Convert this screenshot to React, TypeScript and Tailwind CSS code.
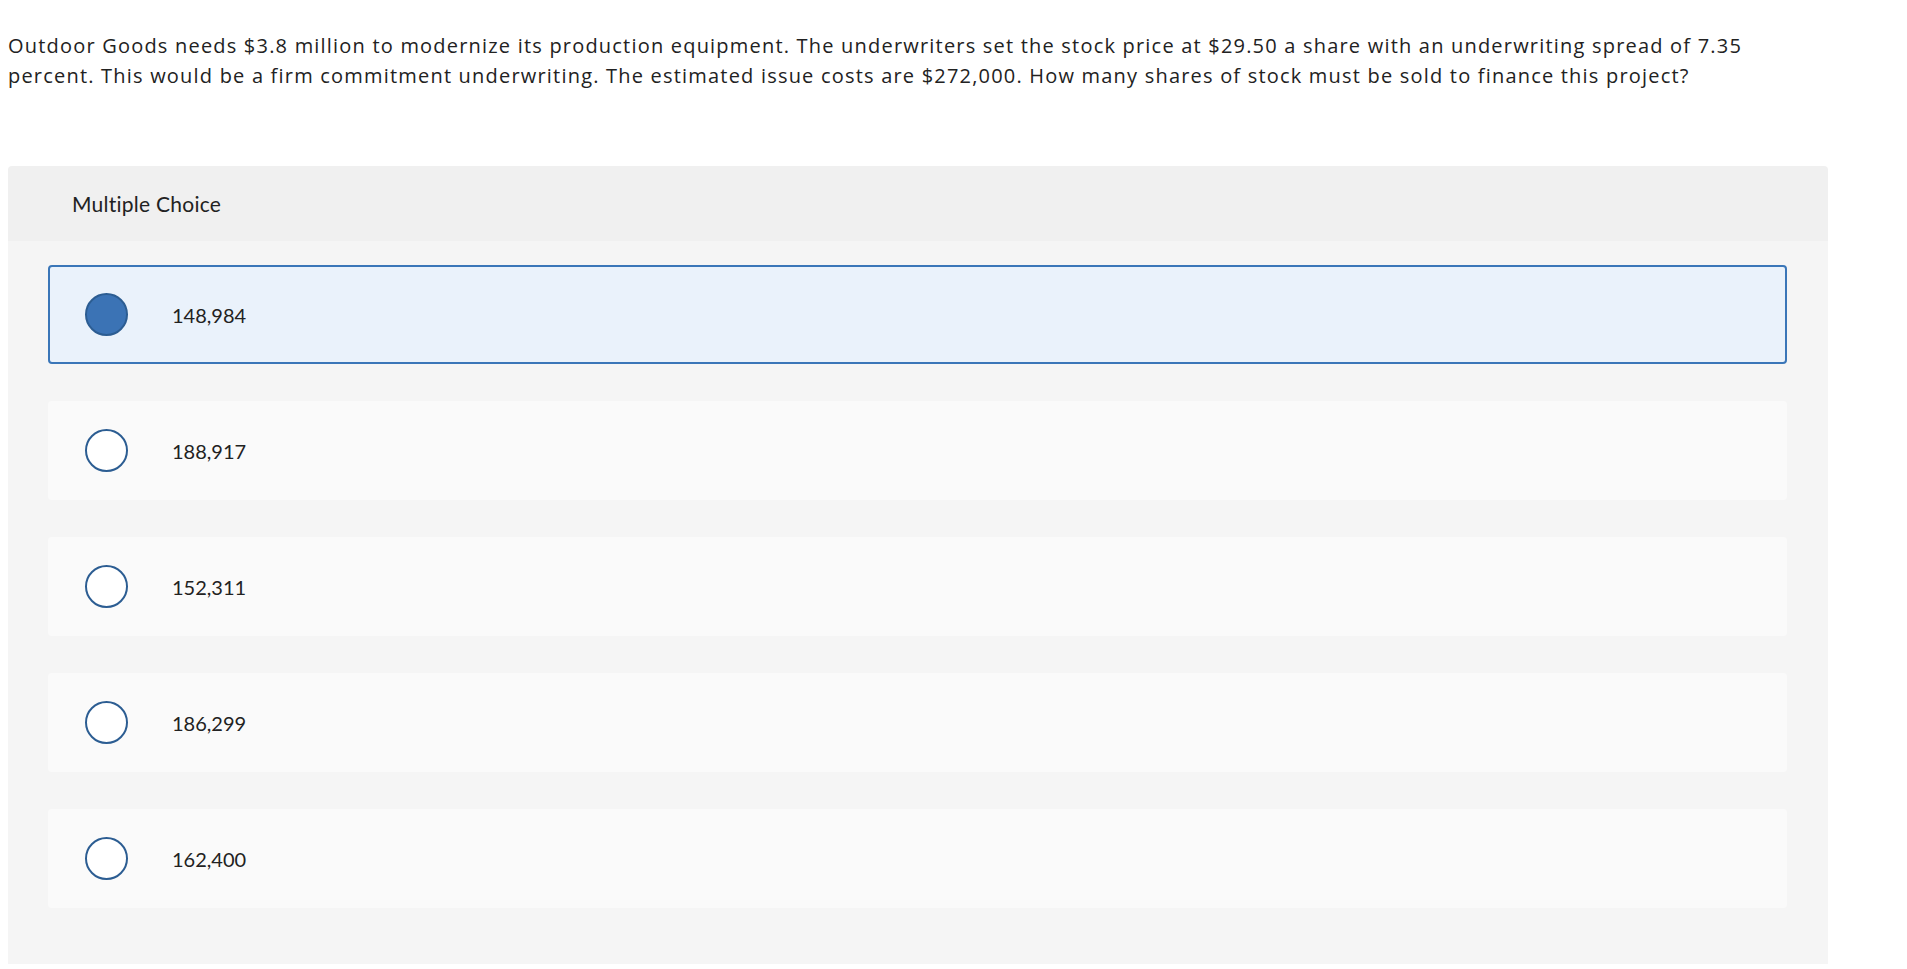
import { useState } from 'react';

const choices = ['148,984', '188,917', '152,311', '186,299', '162,400'];

export default function App() {
  const [picked, setPicked] = useState(0);

  return (
    <div className="min-h-screen bg-white pl-2 pt-[31px] text-[#222] [font-family:Lato,'Open_Sans',sans-serif]">
      <p className="w-[1775px] text-[20px] leading-[30px] tracking-[1.2px] [font-family:'Open_Sans',sans-serif]">
        Outdoor Goods needs $3.8 million to modernize its production equipment. The underwriters set the stock
        price at $29.50 a share with an underwriting spread of 7.35 percent. This would be a firm commitment
        underwriting. The estimated issue costs are $272,000. How many shares of stock must be sold to finance this
        project?
      </p>

      <div className="mt-[75px] w-[1820px] overflow-hidden rounded-t">
        <div className="flex h-[75px] items-center bg-[#f0f0f0] pl-16 text-[21px] tracking-[0.25px]">
          Multiple Choice
        </div>
        <ul className="flex flex-col gap-[37px] bg-[#f5f5f5] pb-[56px] pl-10 pr-[41px] pt-6">
          {choices.map((c, i) => {
            const on = picked === i;
            return (
              <li key={c}>
                <label
                  className={`flex h-[99px] cursor-pointer items-center rounded ${
                    on ? 'border-2 border-[#3a76b8] bg-[#eaf2fb] pl-[35px]' : 'bg-[#fafafa] pl-[37px]'
                  }`}
                >
                  <input
                    type="radio"
                    name="mc"
                    className="hidden"
                    checked={on}
                    onChange={() => setPicked(i)}
                  />
                  <span
                    className={`h-[43px] w-[43px] shrink-0 rounded-full border-2 ${
                      on ? 'border-[#2c5d92] bg-[#3b73b5]' : 'border-[#2c5d92] bg-white'
                    }`}
                  />
                  <span className="ml-[44px] text-[20px]">{c}</span>
                </label>
              </li>
            );
          })}
        </ul>
      </div>
    </div>
  );
}
